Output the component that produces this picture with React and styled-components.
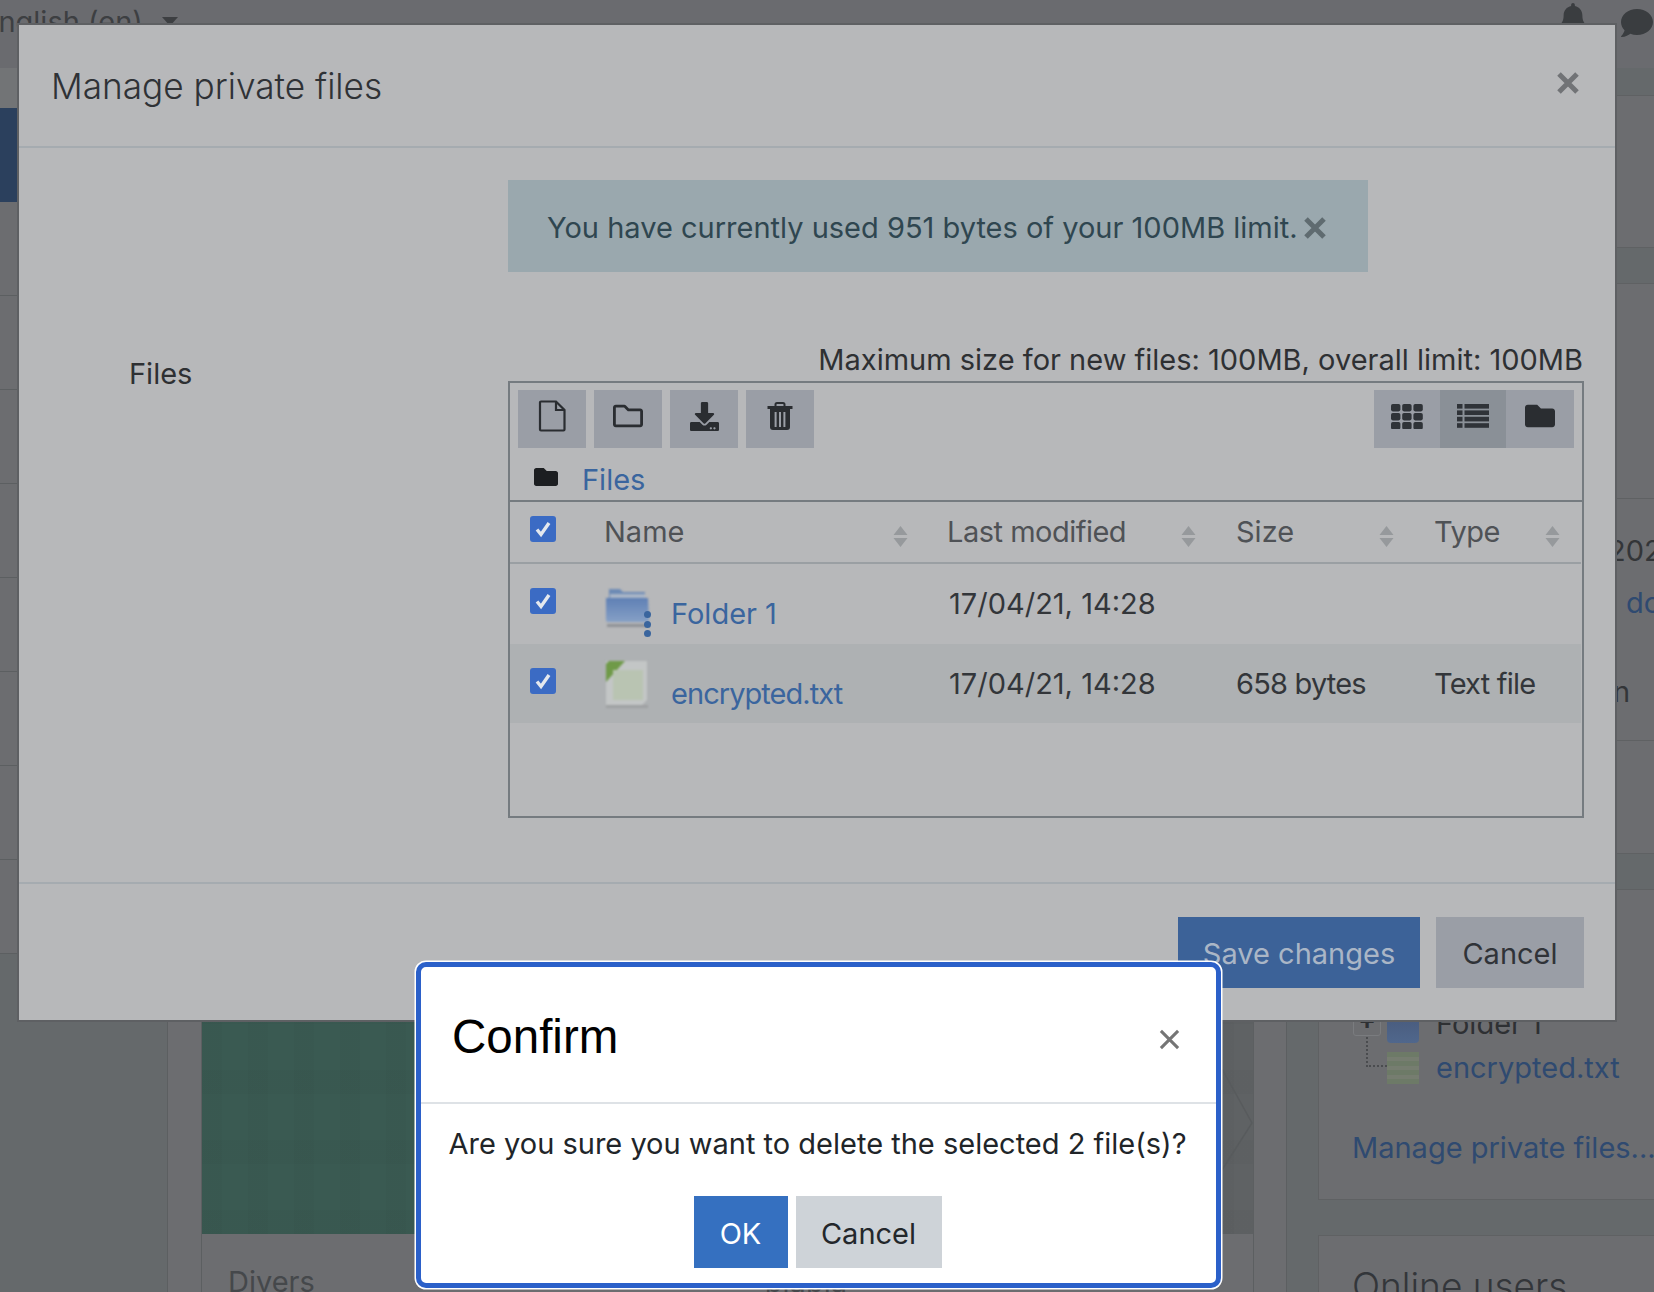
import React from "react";
import styled, { createGlobalStyle } from "styled-components";
import { FaBell, FaComment, FaFolder, FaRegFolder, FaDownload } from "react-icons/fa";

const GlobalStyle = createGlobalStyle`
  html, body {
    margin: 0;
    padding: 0;
    background: #65696b;
    overflow: hidden;
  }
  * { box-sizing: border-box; }
`;

const font = `Inter, "Noto Sans", "Liberation Sans", sans-serif`;

const Screen = styled.div`
  position: relative;
  width: 1654px;
  height: 1292px;
  overflow: hidden;
  font-family: ${font};
  font-size: 29px;
  color: #2e3033;
`;

/* page behind the dialogs */
const NavBar = styled.div`
  height: 68px;
  display: flex;
  align-items: flex-start;
  background: #6a6b6f;
  color: #3d3f42;
`;
const Lang = styled.div`
  margin-left: -19px;
  display: flex;
  align-items: center;
  gap: 19px;
  height: 34px;
  padding-top: 8px;
`;
const Caret = styled.span`
  width: 0;
  height: 0;
  border-left: 8px solid transparent;
  border-right: 8px solid transparent;
  border-top: 9px solid #3d3f42;
`;
const NavIcons = styled.div`
  margin-left: auto;
  margin-right: 1px;
  padding-top: 3px;
  display: flex;
  gap: 33px;
  color: #3a3d40;
`;
const Main = styled.div`
  display: flex;
  height: 1224px;
`;
const Sidebar = styled.div`
  width: 168px;
  border-right: 1px solid #5c5f61;
  flex: none;
`;
const SideTop = styled.div`
  height: 40px;
  background: #727476;
`;
const SideItem = styled.div`
  height: 94px;
  background: ${(p) => (p.$active ? "#2b405d" : "#6c6d70")};
  border-bottom: ${(p) => (p.$active ? "none" : "1px solid #5c5f61")};
`;
const Center = styled.div`
  width: 1119px;
  flex: none;
  background: #6c6d70;
  border-right: 1px solid #5c5f61;
  padding: 832px 33px 0 33px;
`;
const CourseCard = styled.div`
  width: 1053px;
  border-left: 1px solid #5c5f61;
  border-right: 1px solid #5c5f61;
`;
const CourseImage = styled.div`
  position: relative;
  height: 334px;
  background:
    repeating-linear-gradient(90deg, rgba(0,0,0,.02) 0 20px, transparent 20px 46px),
    repeating-linear-gradient(0deg, rgba(0,0,0,.018) 0 24px, transparent 24px 70px),
    linear-gradient(90deg, #3a5a52 0 80%, #5f6264 80%);
`;
const Chevron = styled.svg`
  position: absolute;
  right: 0;
  bottom: 0;
`;
const CourseMeta = styled.div`
  display: flex;
  padding: 28px 0 0 26px;
  color: #45484b;
  line-height: 40px;
`;
const CourseExtra = styled.span`
  margin-left: 450px;
`;
const Aside = styled.div`
  flex: 1;
  padding: 27px 0 0 31px;
  display: flex;
  flex-direction: column;
  gap: 35px;
  min-width: 0;
`;
const SideCard = styled.div`
  width: 420px;
  height: ${(p) => p.$h}px;
  flex: none;
  background: #6c6d70;
  border: 1px solid #5f6163;
`;
const CardSection = styled.div`
  height: ${(p) => p.$h}px;
  border-bottom: 1px solid #5f6163;
  padding-top: 26px;
  line-height: 52px;
  white-space: nowrap;
`;
const PeekLine = styled.div`
  padding-left: ${(p) => p.$left}px;
  margin-top: ${(p) => p.$top || 0}px;
  color: ${(p) => (p.$link ? "#2f4a70" : "#333538")};
`;
const Tree = styled.div`
  padding: 112px 0 0 34px;
`;
const TreeRow = styled.div`
  position: relative;
  display: flex;
  align-items: center;
  height: 44px;
  padding-left: 34px;
  gap: 17px;
  line-height: 44px;
`;
const PlusBox = styled.span`
  position: absolute;
  left: 0;
  top: 6px;
  width: 28px;
  height: 28px;
  border: 1px solid #7a7c7f;
  border-radius: 3px;
  color: #2e3033;
  font-size: 26px;
  font-weight: 700;
  line-height: 22px;
  text-align: center;
`;
const TreeFolder = styled.span`
  width: 32px;
  height: 32px;
  margin-top: 6px;
  border-radius: 4px;
  background: linear-gradient(#47597a, #50678c);
`;
const TreeFile = styled.span`
  width: 32px;
  height: 32px;
  background: repeating-linear-gradient(0deg, #6d7a67 0 5px, #767d70 5px 9px);
`;
const Branch = styled.span`
  position: absolute;
  left: 13px;
  top: -9px;
  width: 21px;
  height: 30px;
  border-left: 2px dotted #4a4c4f;
  border-bottom: 2px dotted #4a4c4f;
`;
const TreeLink = styled.span`
  color: #2f4a70;
`;
const ManageLink = styled.div`
  margin: 36px 0 0 33px;
  color: #2f4a70;
  line-height: 44px;
`;
const OnlineTitle = styled.div`
  padding: 27px 0 0 33px;
  font-size: 37px;
  font-weight: 300;
  color: #33363a;
`;

/* manage private files dialog */
const FilesDialog = styled.div`
  position: absolute;
  left: 19px;
  top: 25px;
  width: 1596px;
  height: 995px;
  background: #b7b8ba;
  box-shadow: 0 0 0 2px #5e6063;
  display: flex;
  flex-direction: column;
`;
const DialogHead = styled.div`
  height: 123px;
  flex: none;
  border-bottom: 2px solid #a5abb0;
  display: flex;
  align-items: center;
  justify-content: space-between;
  padding: 0 36px 5px 32px;
`;
const DialogTitle = styled.h5`
  margin: 5px 0 0;
  font-size: 35.2px;
  font-weight: 300;
  color: #2f3236;
`;
const DialogBody = styled.div`
  flex: 1;
  padding: 32px 31px 0 0;
  display: grid;
  grid-template-columns: 489px 1fr;
  align-content: start;
`;
const FormLabel = styled.div`
  grid-row: 2;
  padding: 80px 0 0 110px;
  line-height: 44px;
`;
const Alert = styled.div`
  grid-column: 2;
  width: 860px;
  height: 92px;
  background: #9aa8ae;
  color: #2f4650;
  display: flex;
  align-items: center;
  padding: 2px 0 0 39px;
  gap: 6px;
`;
const AlertClose = styled.span`
  display: flex;
  margin-top: 2px;
`;
const FormField = styled.div`
  grid-column: 2;
  grid-row: 2;
`;
const LimitNote = styled.div`
  margin-top: 66px;
  text-align: right;
  line-height: 44px;
  padding-right: 1px;
  height: 43px;
`;
const FileManager = styled.div`
  height: 437px;
  border: 2px solid #757b80;
`;
const Toolbar = styled.div`
  display: flex;
  justify-content: space-between;
  padding: 7px 8px 0 8px;
`;
const ToolGroup = styled.div`
  display: flex;
  gap: ${(p) => p.$gap || 0}px;
`;
const ToolButton = styled.span`
  width: ${(p) => p.$w || 68}px;
  height: 58px;
  display: flex;
  align-items: center;
  justify-content: center;
  padding-bottom: 6px;
  background: ${(p) => (p.$active ? "#8a9097" : "#9a9ea6")};
  color: #2a2d31;
`;
const PathBar = styled.div`
  height: 54px;
  border-bottom: 2px solid #757b80;
  display: flex;
  align-items: center;
  padding: 6px 0 0 24px;
  gap: 24px;
  color: #1c1e21;
`;
const PathLink = styled.a`
  color: #3a659e;
  margin-top: 5px;
`;
const FileRow = styled.div`
  display: grid;
  grid-template-columns: 94px 343px 289px 198px 146px;
  height: ${(p) => p.$h}px;
  margin-right: 1px;
  background: ${(p) => (p.$alt ? "#aeb1b3" : "transparent")};
  border-bottom: ${(p) => (p.$head ? "2px solid #9a9fa3" : "none")};
  position: relative;
`;
const CheckCell = styled.div`
  padding: ${(p) => p.$top}px 0 0 20px;
`;
const CheckMark = styled.span`
  display: flex;
  align-items: center;
  justify-content: center;
  width: 26px;
  height: 26px;
  border-radius: 3px;
  background: #3b6bc4;
`;
const HeadCell = styled.div`
  display: flex;
  justify-content: space-between;
  padding: 8px ${(p) => p.$pad}px 0 ${(p) => p.$shift || 0}px;
  margin-left: ${(p) => -(p.$shift ? 0 : 0)}px;
  line-height: 44px;
  color: #4f5256;
  letter-spacing: ${(p) => p.$track || 0}px;
`;
const SortArrows = styled.svg`
  margin-top: 16px;
`;
const NameCell = styled.div`
  position: relative;
  padding: 28px 0 0 67px;
  line-height: 44px;
  color: #3a659e;
  letter-spacing: ${(p) => p.$track || 0}px;
`;
const FileThumb = styled.svg`
  position: absolute;
  left: 1px;
  top: ${(p) => p.$top}px;
  filter: blur(0.8px);
`;
const MenuDots = styled.span`
  position: absolute;
  left: 40px;
  top: 47px;
  display: flex;
  flex-direction: column;
  gap: 2.5px;
  i {
    width: 7px;
    height: 7px;
    border-radius: 50%;
    background: #3a659e;
  }
`;
const DataCell = styled.div`
  padding: 18px 0 0 ${(p) => p.$indent || 0}px;
  line-height: 44px;
  color: #33363a;
  letter-spacing: ${(p) => p.$track || 0}px;
`;
const DialogFoot = styled.div`
  height: 138px;
  flex: none;
  border-top: 2px solid #a5abb0;
  display: flex;
  justify-content: flex-end;
  gap: 16px;
  padding: 33px 31px 0 0;
`;
const FootButton = styled.span`
  width: ${(p) => p.$w}px;
  height: 71px;
  display: flex;
  align-items: center;
  justify-content: center;
  padding-top: 2px;
  background: ${(p) => (p.$primary ? "#3c6298" : "#9a9ea6")};
  color: ${(p) => (p.$primary ? "#aab6c6" : "#303338")};
`;

/* confirm dialog */
const ConfirmBox = styled.div`
  position: absolute;
  left: 416px;
  top: 962px;
  width: 805px;
  height: 326px;
  background: #fff;
  border: 5px solid #2b60c9;
  border-radius: 10px;
  box-shadow: 0 0 0 1.5px #fff;
  color: #212529;
`;
const ConfirmHead = styled.div`
  height: 137px;
  border-bottom: 2px solid #dee2e6;
  display: flex;
  align-items: center;
  justify-content: space-between;
  padding: 0 36px 0 31px;
`;
const ConfirmTitle = styled.h3`
  margin: 4px 0 0;
  font-family: "Liberation Sans", Arial, sans-serif;
  font-size: 47.5px;
  font-weight: 400;
  color: #000;
`;
const ConfirmClose = styled.span`
  display: flex;
  margin-top: 9px;
`;
const ConfirmText = styled.div`
  padding: 18px 2px 0 0;
  line-height: 44px;
  text-align: center;
`;
const ConfirmActions = styled.div`
  margin-top: 30px;
  padding-right: 2px;
  display: flex;
  justify-content: center;
  gap: 8px;
`;
const ConfirmButton = styled.span`
  width: ${(p) => p.$w}px;
  height: 72px;
  display: flex;
  align-items: center;
  justify-content: center;
  padding-top: 2px;
  background: ${(p) => (p.$primary ? "#3570c0" : "#ced3d8")};
  color: ${(p) => (p.$primary ? "#fff" : "#23272b")};
`;

function CrossIcon({ size, weight, color }) {
  return (
    <svg width={size} height={size} viewBox="0 0 22 22">
      <path d="M2 2 L20 20 M20 2 L2 20" stroke={color} strokeWidth={weight} fill="none" />
    </svg>
  );
}

function SortIcon() {
  return (
    <SortArrows width="15" height="21" viewBox="0 0 15 21">
      <path d="M7.5 0 L14.5 9 H0.5 Z M7.5 21 L14.5 12 H0.5 Z" fill="#96999c" />
    </SortArrows>
  );
}

function Check() {
  return (
    <CheckMark>
      <svg width="18" height="18" viewBox="0 0 18 18">
        <path d="M3 9.5 L7 14.5 L15 3" stroke="#e4e8ee" strokeWidth="3.4" fill="none" />
      </svg>
    </CheckMark>
  );
}

function FileOutline() {
  return (
    <svg width="28" height="32" viewBox="0 0 28 32">
      <path d="M2 2.5 a1 1 0 0 1 1-1 H18 L26.5 10 V29.5 a1 1 0 0 1-1 1 H3 a1 1 0 0 1-1-1 Z M18 1.5 V10 H26.5" stroke="#2a2d31" strokeWidth="2.2" fill="none" />
    </svg>
  );
}

function TrashIcon() {
  return (
    <svg width="26" height="28" viewBox="0 0 26 28">
      <path d="M8.5 4.5 V2.5 Q8.5 1 10 1 H16 Q17.5 1 17.5 2.5 V4.5" stroke="#2a2d31" strokeWidth="2" fill="none" />
      <rect x="0.5" y="4" width="25" height="3" fill="#2a2d31" />
      <path d="M3 7 H23 V25 Q23 28 20 28 H6 Q3 28 3 25 Z" fill="#2a2d31" />
      {[7.6, 12, 16.4].map((x) => (
        <rect key={x} x={x} y="10" width="2" height="15" fill="#9a9ea6" />
      ))}
    </svg>
  );
}

function GridIcon() {
  const cells = [];
  for (let r = 0; r < 3; r++) {
    for (let c = 0; c < 3; c++) {
      cells.push(<rect key={`${r}-${c}`} x={c * 11.2} y={r * 9} width="9.4" height="7.4" rx="1.8" />);
    }
  }
  return (
    <svg width="32" height="25" viewBox="0 0 32 25" fill="#2f3338">
      {cells}
    </svg>
  );
}

function ListIcon() {
  return (
    <svg width="32" height="25" viewBox="0 0 32 25" fill="#2f3338">
      {[0, 6.4, 12.8, 19.2].map((y) => (
        <g key={y}>
          <rect x="0" y={y} width="5.5" height="4.6" />
          <rect x="7.5" y={y} width="24.5" height="4.6" />
        </g>
      ))}
    </svg>
  );
}

function FolderThumb() {
  return (
    <FileThumb $top={23} width="46" height="46" viewBox="0 0 46 46">
      <defs>
        <linearGradient id="folderFill" x1="0" y1="0" x2="0" y2="1">
          <stop offset="0" stopColor="#5f80b5" />
          <stop offset="1" stopColor="#86a0c6" />
        </linearGradient>
      </defs>
      <path d="M4 2 H15 L18 5 H40 V14 H4 Z" fill="#6d8bb5" />
      <rect x="5" y="7" width="35" height="8" fill="#a9b5c6" />
      <path d="M1 11 H43 L44 33 Q44 35 41 35 H4 Q1 35 1 33 Z" fill="url(#folderFill)" />
      <rect x="2" y="37" width="42" height="3" fill="#8f9297" />
    </FileThumb>
  );
}

function TextThumb() {
  return (
    <FileThumb $top={16} width="46" height="50" viewBox="0 0 46 50">
      <path d="M1 1 H42 V40 L36 46 H1 Z" fill="#c3c6c6" />
      <path d="M4 1 H20 L1 22 V4 Z" fill="#6f9a48" />
      <rect x="8" y="10" width="30" height="30" fill="#b9c4b2" />
      <rect x="1" y="45" width="42" height="3" fill="#9ea0a2" />
    </FileThumb>
  );
}

function App() {
  return (
    <Screen>
      <GlobalStyle />
      <NavBar>
        <Lang>
          English (en)
          <Caret />
        </Lang>
        <NavIcons>
          <FaBell size={30} />
          <FaComment size={32} style={{ marginTop: 4 }} />
        </NavIcons>
      </NavBar>
      <Main>
        <Sidebar>
          <SideTop />
          <SideItem $active />
          {[0, 1, 2, 3, 4, 5, 6, 7].map((n) => (
            <SideItem key={n} />
          ))}
        </Sidebar>
        <Center>
          <CourseCard>
            <CourseImage>
              <Chevron width="31" height="165" viewBox="0 0 31 165">
                <path d="M0 0 L30 54 L0 101" stroke="#585b5d" strokeWidth="1.5" fill="none" />
              </Chevron>
            </CourseImage>
            <CourseMeta>
              Divers
              <CourseExtra>blabla</CourseExtra>
            </CourseMeta>
          </CourseCard>
        </Center>
        <Aside>
          <SideCard $h={153} />
          <SideCard $h={571}>
            <CardSection $h={215} />
            <CardSection $h={242}>
              <PeekLine $left={289}>2021</PeekLine>
              <PeekLine $left={307} $link>
                do
              </PeekLine>
              <PeekLine $left={294} $top={37}>
                n
              </PeekLine>
            </CardSection>
          </SideCard>
          <SideCard $h={311}>
            <Tree>
              <TreeRow>
                <PlusBox>+</PlusBox>
                <TreeFolder />
                Folder 1
              </TreeRow>
              <TreeRow>
                <Branch />
                <TreeFile />
                <TreeLink>encrypted.txt</TreeLink>
              </TreeRow>
            </Tree>
            <ManageLink>Manage private files...</ManageLink>
          </SideCard>
          <SideCard $h={120}>
            <OnlineTitle>Online users</OnlineTitle>
          </SideCard>
        </Aside>
      </Main>

      <FilesDialog>
        <DialogHead>
          <DialogTitle>Manage private files</DialogTitle>
          <CrossIcon size={22} weight={5} color="#717376" />
        </DialogHead>
        <DialogBody>
          <Alert>
            You have currently used 951 bytes of your 100MB limit.
            <AlertClose>
              <CrossIcon size={22} weight={5} color="#5f6b70" />
            </AlertClose>
          </Alert>
          <FormLabel>Files</FormLabel>
          <FormField>
            <LimitNote>Maximum size for new files: 100MB, overall limit: 100MB</LimitNote>
            <FileManager>
              <Toolbar>
                <ToolGroup $gap={8}>
                  <ToolButton>
                    <FileOutline />
                  </ToolButton>
                  <ToolButton>
                    <FaRegFolder size={30} />
                  </ToolButton>
                  <ToolButton>
                    <FaDownload size={29} />
                  </ToolButton>
                  <ToolButton>
                    <TrashIcon />
                  </ToolButton>
                </ToolGroup>
                <ToolGroup>
                  <ToolButton $w={66}>
                    <GridIcon />
                  </ToolButton>
                  <ToolButton $w={66} $active>
                    <ListIcon />
                  </ToolButton>
                  <ToolButton $w={68}>
                    <FaFolder size={30} />
                  </ToolButton>
                </ToolGroup>
              </Toolbar>
              <PathBar>
                <FaFolder size={24} />
                <PathLink>Files</PathLink>
              </PathBar>
              <FileRow $head $h={62}>
                <CheckCell $top={14}>
                  <Check />
                </CheckCell>
                <HeadCell $pad={39}>
                  Name
                  <SortIcon />
                </HeadCell>
                <HeadCell $pad={40} $track={-0.5}>
                  Last modified
                  <SortIcon />
                </HeadCell>
                <HeadCell $pad={40}>
                  Size
                  <SortIcon />
                </HeadCell>
                <HeadCell $pad={20} $track={-0.5}>
                  Type
                  <SortIcon />
                </HeadCell>
              </FileRow>
              <FileRow $h={80}>
                <CheckCell $top={24}>
                  <Check />
                </CheckCell>
                <NameCell>
                  <FolderThumb />
                  <MenuDots>
                    <i />
                    <i />
                    <i />
                  </MenuDots>
                  Folder 1
                </NameCell>
                <DataCell $indent={2}>17/04/21, 14:28</DataCell>
              </FileRow>
              <FileRow $alt $h={79}>
                <CheckCell $top={24}>
                  <Check />
                </CheckCell>
                <NameCell $track={-0.95}>
                  <TextThumb />
                  encrypted.txt
                </NameCell>
                <DataCell $indent={2}>17/04/21, 14:28</DataCell>
                <DataCell $track={-0.8}>658 bytes</DataCell>
                <DataCell $track={-0.8}>Text file</DataCell>
              </FileRow>
            </FileManager>
          </FormField>
        </DialogBody>
        <DialogFoot>
          <FootButton $primary $w={242}>
            Save changes
          </FootButton>
          <FootButton $w={148}>Cancel</FootButton>
        </DialogFoot>
      </FilesDialog>

      <ConfirmBox>
        <ConfirmHead>
          <ConfirmTitle>Confirm</ConfirmTitle>
          <ConfirmClose>
            <CrossIcon size={21} weight={3.2} color="#757575" />
          </ConfirmClose>
        </ConfirmHead>
        <ConfirmText>Are you sure you want to delete the selected 2 file(s)?</ConfirmText>
        <ConfirmActions>
          <ConfirmButton $primary $w={94}>
            OK
          </ConfirmButton>
          <ConfirmButton $w={146}>Cancel</ConfirmButton>
        </ConfirmActions>
      </ConfirmBox>
    </Screen>
  );
}

export default App;
